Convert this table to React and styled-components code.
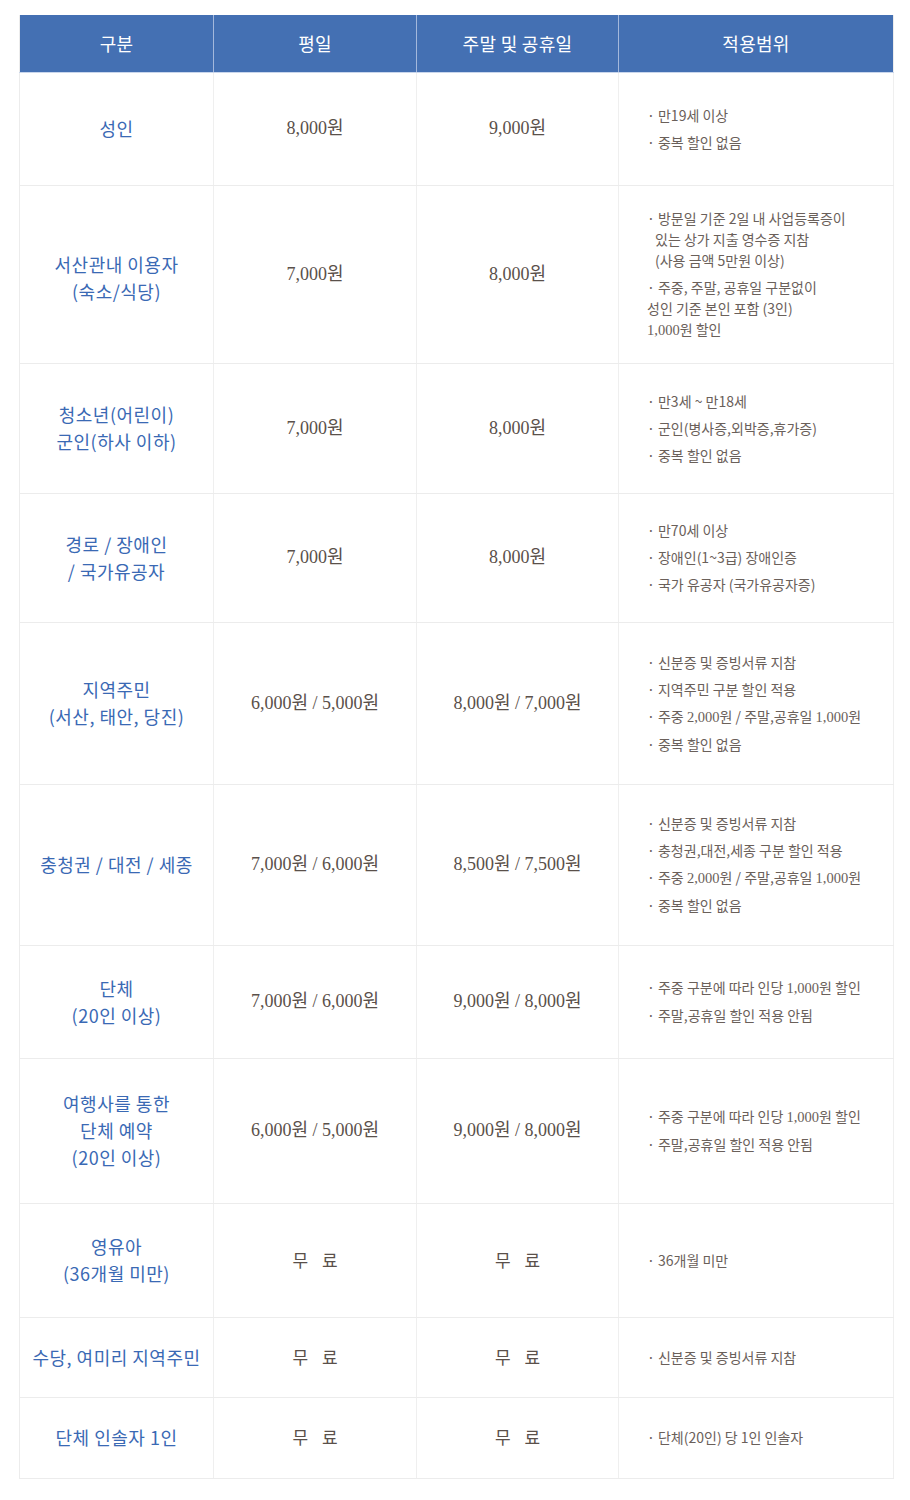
import React from "react";
import styled, { createGlobalStyle } from "styled-components";

const Global = createGlobalStyle`
  html, body { margin: 0; padding: 0; background: #ffffff; }
  body { font-family: "Noto Sans CJK KR", "Noto Sans", sans-serif; }
`;

const Page = styled.div`
  padding: 15px 17px 20px 19px;
`;

const Table = styled.table`
  width: 874px;
  table-layout: fixed;
  border-collapse: collapse;
  border-left: 1px solid #ececec;
  border-right: 1px solid #ececec;
`;

const HeadRow = styled.tr`
  height: 57px;
  background: #4470b3;
`;

const HeadCell = styled.th`
  padding: 0;
  color: #ffffff;
  font-family: "Noto Sans CJK KR", sans-serif;
  font-weight: 400;
  font-size: 18px;
  letter-spacing: 0.3px;
  text-align: center;
  vertical-align: middle;
  border-right: 1px solid #a4b8dc;
  border-bottom: 1px solid #c9d6ec;
  &:last-child { border-right: none; }
`;

const Row = styled.tr`
  height: ${(p) => p.$h}px;
`;

const Cell = styled.td`
  padding: 0;
  vertical-align: middle;
  border-right: 1px solid #efefef;
  border-bottom: 1px solid #ececec;
`;

const LabelCell = styled(Cell)`
  padding-top: ${(p) => p.$shift || 0}px;
  text-align: center;
  color: #3a69b4;
  font-family: "Noto Sans CJK KR", sans-serif;
  font-size: 18px;
  letter-spacing: 0.5px;
  line-height: 27px;
`;

const PriceCell = styled(Cell)`
  text-align: center;
  color: #5a504a;
  font-family: "Liberation Serif", "Noto Sans CJK KR", serif;
  font-size: 18px;
  line-height: 27px;
`;

const FreeText = styled.span`
  font-family: "Noto Sans CJK KR", sans-serif;
  font-size: 17px;
  letter-spacing: 5px;
  padding-left: 5px;
`;

const NoteCell = styled(Cell)`
  padding-left: 28px;
  text-align: left;
  color: #6a605a;
  font-family: "Noto Sans CJK KR", sans-serif;
  font-size: 14px;
  line-height: 21px;
`;

const Num = styled.span`
  font-family: "Liberation Serif", serif;
  font-size: 14.5px;
`;

const NoteList = styled.ul`
  list-style: none;
  margin: 0;
  padding: 0;
  display: flex;
  flex-direction: column;
  gap: 6px;
`;

const NoteItem = styled.li`
  margin: 0;
`;

const Indent = styled.span`
  display: inline-block;
  padding-left: ${(p) => (p.$indent ? 8 : 0)}px;
`;

const Line = styled.span`
  display: block;
`;

const head = ["구분", "평일", "주말 및 공휴일", "적용범위"];

const group = [
  ["· 주중 구분에 따라 인당 #1,000#원 할인"],
  ["· 주말,공휴일 할인 적용 안됨"],
];

const rows = [
  { h: 113, label: ["성인"], wd: "8,000원", we: "9,000원", notes: [["· 만19세 이상"], ["· 중복 할인 없음"]] },
  {
    h: 178,
    shift: 8,
    label: ["서산관내 이용자", "(숙소/식당)"],
    wd: "7,000원",
    we: "8,000원",
    notes: [
      ["· 방문일 기준 2일 내 사업등록증이", "있는 상가 지출 영수증 지참", "(사용 금액 5만원 이상)"],
      ["· 주중, 주말, 공휴일 구분없이", "성인 기준 본인 포함 (3인)", "#1,000#원 할인"],
    ],
    indentFirst: true,
  },
  {
    h: 130,
    label: ["청소년(어린이)", "군인(하사 이하)"],
    wd: "7,000원",
    we: "8,000원",
    notes: [["· 만3세 ~ 만18세"], ["· 군인(병사증,외박증,휴가증)"], ["· 중복 할인 없음"]],
  },
  {
    h: 129,
    label: ["경로 / 장애인", "/ 국가유공자"],
    wd: "7,000원",
    we: "8,000원",
    notes: [["· 만70세 이상"], ["· 장애인(1~3급) 장애인증"], ["· 국가 유공자 (국가유공자증)"]],
  },
  {
    h: 162,
    label: ["지역주민", "(서산, 태안, 당진)"],
    wd: "6,000원 / 5,000원",
    we: "8,000원 / 7,000원",
    notes: [
      ["· 신분증 및 증빙서류 지참"],
      ["· 지역주민 구분 할인 적용"],
      ["· 주중 #2,000#원 / 주말,공휴일 #1,000#원"],
      ["· 중복 할인 없음"],
    ],
  },
  {
    h: 161,
    label: ["충청권 / 대전 / 세종"],
    wd: "7,000원 / 6,000원",
    we: "8,500원 / 7,500원",
    notes: [
      ["· 신분증 및 증빙서류 지참"],
      ["· 충청권,대전,세종 구분 할인 적용"],
      ["· 주중 #2,000#원 / 주말,공휴일 #1,000#원"],
      ["· 중복 할인 없음"],
    ],
  },
  { h: 113, label: ["단체", "(20인 이상)"], wd: "7,000원 / 6,000원", we: "9,000원 / 8,000원", notes: group },
  {
    h: 145,
    label: ["여행사를 통한", "단체 예약", "(20인 이상)"],
    wd: "6,000원 / 5,000원",
    we: "9,000원 / 8,000원",
    notes: group,
  },
  { h: 114, label: ["영유아", "(36개월 미만)"], free: true, notes: [["· 36개월 미만"]] },
  { h: 80, label: ["수당, 여미리 지역주민"], free: true, notes: [["· 신분증 및 증빙서류 지참"]] },
  { h: 81, label: ["단체 인솔자 1인"], free: true, notes: [["· 단체(20인) 당 1인 인솔자"]] },
];

function Price({ value, free }) {
  if (free) return <FreeText>무 료</FreeText>;
  return value;
}

function NoteText({ text }) {
  const parts = text.split("#");
  return parts.map((p, i) => (i % 2 === 1 ? <Num key={i}>{p}</Num> : <React.Fragment key={i}>{p}</React.Fragment>));
}

export default function App() {
  return (
    <Page>
      <Global />
      <Table>
        <colgroup>
          <col style={{ width: 194 }} />
          <col style={{ width: 203 }} />
          <col style={{ width: 202 }} />
          <col style={{ width: 275 }} />
        </colgroup>
        <thead>
          <HeadRow>
            {head.map((h) => (
              <HeadCell key={h}>{h}</HeadCell>
            ))}
          </HeadRow>
        </thead>
        <tbody>
          {rows.map((r, i) => (
            <Row key={i} $h={r.h}>
              <LabelCell $shift={r.shift}>
                {r.label.map((l, j) => (
                  <Line key={j}>{l}</Line>
                ))}
              </LabelCell>
              <PriceCell>
                <Price value={r.wd} free={r.free} />
              </PriceCell>
              <PriceCell>
                <Price value={r.we} free={r.free} />
              </PriceCell>
              <NoteCell>
                <NoteList>
                  {r.notes.map((item, j) => (
                    <NoteItem key={j}>
                      {item.map((l, k) => (
                        <Line key={k}>
                          <Indent $indent={r.indentFirst && j === 0 && k > 0}>
                            <NoteText text={l} />
                          </Indent>
                        </Line>
                      ))}
                    </NoteItem>
                  ))}
                </NoteList>
              </NoteCell>
            </Row>
          ))}
        </tbody>
      </Table>
    </Page>
  );
}
